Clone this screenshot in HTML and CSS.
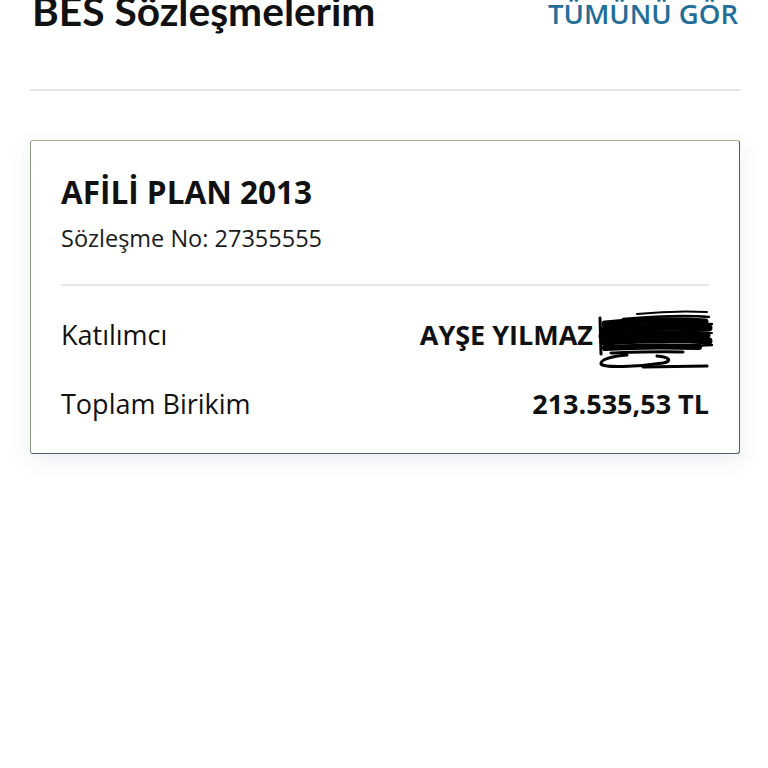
FILE: index.html
```html
<!DOCTYPE html>
<html lang="tr">
<head>
<meta charset="utf-8">
<link rel="stylesheet" href="styles.css">
</head>
<body>
<div class="page">
  <header class="head">
    <h1 class="title">BES Sözleşmelerim</h1>
    <a class="see-all">TÜMÜNÜ GÖR</a>
  </header>
  <div class="rule"></div>
  <section class="card">
    <div class="card-top">
      <h2 class="plan">AFİLİ PLAN 2013</h2>
      <div class="no">Sözleşme No: 27355555</div>
    </div>
    <div class="card-rule"></div>
    <div class="row row-first">
      <span class="label">Katılımcı</span>
      <span class="value name">AYŞE YILMAZ<svg class="scribble" width="116" height="62" viewBox="0 0 116 62">
        <g fill="none" stroke="#000" stroke-linecap="round" stroke-linejoin="round">
          <path d="M40 6 C60 4 90 3 110 4" stroke-width="2"/>
          <path d="M26 11 C60 8 90 7 112 9" stroke-width="2.5"/>
          <path d="M8 16 C40 13 80 12 108 14" stroke-width="7"/>
          <path d="M6 22 C40 19 80 19 112 20" stroke-width="7"/>
          <path d="M5 28 C40 26 80 25 110 27" stroke-width="7"/>
          <path d="M6 34 C40 32 80 31 112 33" stroke-width="7"/>
          <path d="M8 40 C40 38 70 38 102 39" stroke-width="6"/>
          <path d="M14 45 C40 44 60 43 86 44" stroke-width="3"/>
          <path d="M60 25 C80 24 100 25 115 25" stroke-width="2"/>
          <path d="M94 17 L115 16" stroke-width="2.5"/>
          <path d="M94 38 L115 37" stroke-width="2.5"/>
          <path d="M3 10 L4 46" stroke-width="3"/>
          <path d="M30 47 C14 48 3 52 4 56 C7 60 40 59 66 55 C76 53 72 49 60 48" stroke-width="3"/>
          <path d="M46 59 L110 58" stroke-width="3"/>
        </g>
      </svg></span>
    </div>
    <div class="row row-second">
      <span class="label">Toplam Birikim</span>
      <span class="value">213.535,53 TL</span>
    </div>
  </section>
</div>
</body>
</html>
```

FILE: styles.css
```css
html, body {
  margin: 0;
  padding: 0;
  background: #ffffff;
}

.page {
  width: 768px;
  height: 768px;
  overflow: hidden;
  font-family: "Open Sans", "Liberation Sans", sans-serif;
  color: #111111;
}

.head {
  display: flex;
  justify-content: space-between;
  align-items: flex-start;
  padding: 0 30px 0 32px;
  margin-top: -9px;
  height: 40px;
}

.title {
  margin: 0;
  font-family: "Lato", "Liberation Sans", sans-serif;
  font-weight: 700;
  font-size: 40.7px;
  line-height: 40px;
  color: #111111;
}

.see-all {
  margin-top: 6px;
  font-family: "Open Sans", sans-serif;
  font-weight: 600;
  font-size: 27.5px;
  line-height: 34px;
  color: #236e98;
}

.rule {
  height: 2px;
  background: #e4e4e4;
  margin: 58px 28px 0 30px;
}

.card {
  margin: 49px 28px 0 30px;
  height: 314px;
  box-sizing: border-box;
  border: 1.5px solid;
  border-color: #aab38e #4f5f70 #4f5f70 #8f9a86;
  border-radius: 3px;
  box-shadow: 0 6px 22px rgba(60, 80, 120, 0.10);
  padding: 0 30px;
  background: #ffffff;
}

.card-top {
  padding-top: 31px;
}

.plan {
  margin: 0;
  font-family: "Open Sans", sans-serif;
  font-weight: 700;
  font-size: 31.5px;
  line-height: 40px;
  color: #111111;
}

.no {
  font-size: 23.5px;
  line-height: 30px;
  margin-top: 11px;
  color: #1a1a1a;
}

.card-rule {
  height: 2px;
  background: #e6e6e6;
  margin-top: 31px;
}

.row {
  display: flex;
  justify-content: space-between;
  align-items: center;
  height: 36px;
}

.row-first {
  margin-top: 30.5px;
}

.row-second {
  margin-top: 33px;
}

.label {
  font-size: 27px;
  line-height: 36px;
  color: #111111;
}

.value {
  font-weight: 700;
  font-size: 27px;
  line-height: 36px;
  color: #111111;
  display: flex;
  align-items: center;
}

.scribble {
  margin-left: 4px;
  margin-right: -4px;
  margin-top: 4px;
  margin-bottom: -4px;
  flex: none;
}
```
